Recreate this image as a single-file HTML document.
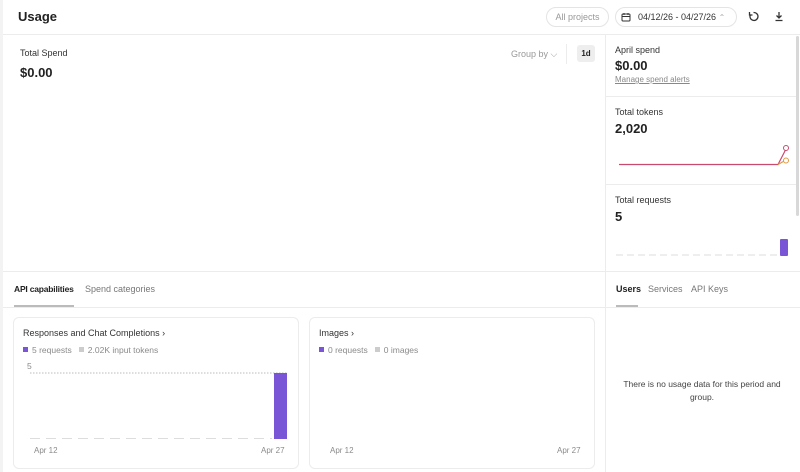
<!DOCTYPE html>
<html><head><style>
*{box-sizing:border-box;margin:0;padding:0}
body{width:800px;height:472px;overflow:hidden;background:#fff;font-family:"Liberation Sans",sans-serif;color:#222;position:relative}
.a{position:absolute}
.t{font-size:9px;color:#333}
.big{font-size:13px;font-weight:bold;color:#222}
.g{color:#8a8a8a}
.hl{position:absolute;height:1px;background:#ececec}
.vl{position:absolute;width:1px;background:#ececec}
.card{position:absolute;border:1px solid #ececec;border-radius:6px;background:#fff}
.sq{display:inline-block;width:5px;height:5px;vertical-align:1px;margin-right:4px}
</style></head><body>
<div class="a" style="left:0;top:0;width:3px;height:472px;background:#f3f3f3"></div>
<div class="a" style="left:18px;top:9px;font-size:13px;font-weight:bold;color:#222">Usage</div>
<div class="a" style="left:546px;top:7px;width:63px;height:20px;border:1px solid #e4e4e4;border-radius:10px;font-size:9px;color:#999;text-align:center;line-height:18px">All projects</div>
<div class="a" style="left:615px;top:7px;width:122px;height:20px;border:1px solid #e4e4e4;border-radius:10px;font-size:9px;color:#333;line-height:18px;padding-left:22px">04/12/26 - 04/27/26 <span style="color:#aaa;font-size:8px">⌃</span></div>
<svg class="a" style="left:621px;top:12px" width="10" height="10" viewBox="0 0 10 10"><rect x="1" y="2" width="8" height="7" rx="1" fill="none" stroke="#333" stroke-width="1"/><line x1="1" y1="4.5" x2="9" y2="4.5" stroke="#333"/><line x1="3" y1="1" x2="3" y2="3" stroke="#333"/><line x1="7" y1="1" x2="7" y2="3" stroke="#333"/></svg>
<svg class="a" style="left:748px;top:11px" width="11" height="11" viewBox="0 0 11 11"><path d="M2.5 3.5A4 4 0 1 0 5.5 1.5" fill="none" stroke="#333" stroke-width="1.3"/><path d="M1.5 1v3h3" fill="none" stroke="#333" stroke-width="1.3"/></svg>
<svg class="a" style="left:774px;top:11px" width="10" height="11" viewBox="0 0 10 11"><path d="M5 1v6M2.5 4.5L5 7l2.5-2.5M1.5 9.5h7" fill="none" stroke="#333" stroke-width="1.3"/></svg>
<div class="hl" style="left:3px;top:34px;width:797px"></div>
<div class="a t" style="left:20px;top:48px">Total Spend</div>
<div class="a big" style="left:20px;top:65px">$0.00</div>
<div class="a" style="left:511px;top:49px;font-size:9px;color:#999">Group by ⌵</div>
<div class="vl" style="left:566px;top:44px;height:20px"></div>
<div class="a" style="left:577px;top:45px;width:18px;height:17px;background:#eee;border-radius:3px;font-size:8px;font-weight:bold;text-align:center;line-height:17px">1d</div>
<div class="vl" style="left:605px;top:35px;height:437px"></div>
<div class="a" style="left:796px;top:36px;width:3px;height:180px;background:#d8d8d8;border-radius:2px"></div>
<div class="a t" style="left:615px;top:45px">April spend</div>
<div class="a big" style="left:615px;top:58px">$0.00</div>
<div class="a" style="left:615px;top:75px;font-size:8px;color:#888;text-decoration:underline">Manage spend alerts</div>
<div class="hl" style="left:606px;top:96px;width:190px"></div>
<div class="a t" style="left:615px;top:107px">Total tokens</div>
<div class="a big" style="left:615px;top:121px">2,020</div>
<svg class="a" style="left:615px;top:140px" width="180" height="30"><path d="M4 24.5H163L171 9" fill="none" stroke="#c84a6e" stroke-width="1.2"/><path d="M163 24.5L171 20" fill="none" stroke="#e09a40" stroke-width="1.2"/><circle cx="171" cy="8" r="2.5" fill="#fff" stroke="#c84a6e"/><circle cx="171" cy="20.5" r="2.5" fill="#fff" stroke="#e09a40"/></svg>
<div class="hl" style="left:606px;top:184px;width:190px"></div>
<div class="a t" style="left:615px;top:195px">Total requests</div>
<div class="a big" style="left:615px;top:209px">5</div>
<svg class="a" style="left:615px;top:238px" width="180" height="20"><line x1="1" y1="17" x2="163" y2="17" stroke="#ddd" stroke-width="1" stroke-dasharray="7 4"/><rect x="165" y="1" width="8" height="17" rx="1" fill="#7a55d6"/></svg>
<div class="hl" style="left:3px;top:271px;width:797px"></div>
<div class="a" style="left:14px;top:284px;font-size:8.5px;font-weight:bold;color:#222;letter-spacing:-0.2px">API capabilities</div>
<div class="a" style="left:85px;top:284px;font-size:9px;color:#777">Spend categories</div>
<div class="a" style="left:14px;top:305px;width:60px;height:2px;background:#bbb"></div>
<div class="a" style="left:616px;top:284px;font-size:9px;font-weight:bold;color:#222">Users</div>
<div class="a" style="left:648px;top:284px;font-size:9px;color:#777">Services</div>
<div class="a" style="left:691px;top:284px;font-size:9px;color:#777">API Keys</div>
<div class="a" style="left:616px;top:305px;width:22px;height:2px;background:#bbb"></div>
<div class="hl" style="left:3px;top:307px;width:797px"></div>
<div class="a" style="left:606px;top:378px;width:192px;text-align:center;font-size:8.5px;color:#444;line-height:13px">There is no usage data for this period and<br>group.</div>
<div class="card" style="left:13px;top:317px;width:286px;height:152px"></div>
<div class="a t" style="left:23px;top:328px">Responses and Chat Completions ›</div>
<div class="a g" style="left:23px;top:345px;font-size:8.5px"><span class="sq" style="background:#7a55d6"></span>5 requests &nbsp;&nbsp;<span class="sq" style="background:#ccc"></span>2.02K input tokens</div>
<div class="a g" style="left:27px;top:361px;font-size:8.5px">5</div>
<svg class="a" style="left:28px;top:370px" width="262" height="72"><line x1="2" y1="3" x2="260" y2="3" stroke="#bbb" stroke-dasharray="1.5 1.5"/><line x1="2" y1="68.5" x2="244" y2="68.5" stroke="#ddd" stroke-dasharray="10 6"/><rect x="246" y="3" width="13" height="66" fill="#7a55d6"/></svg>
<div class="a g" style="left:34px;top:446px;font-size:8px">Apr 12</div>
<div class="a g" style="left:261px;top:446px;font-size:8px">Apr 27</div>
<div class="card" style="left:309px;top:317px;width:286px;height:152px"></div>
<div class="a t" style="left:319px;top:328px">Images ›</div>
<div class="a g" style="left:319px;top:345px;font-size:8.5px"><span class="sq" style="background:#7a55d6"></span>0 requests &nbsp;&nbsp;<span class="sq" style="background:#ccc"></span>0 images</div>
<div class="a g" style="left:330px;top:446px;font-size:8px">Apr 12</div>
<div class="a g" style="left:557px;top:446px;font-size:8px">Apr 27</div>
</body></html>
